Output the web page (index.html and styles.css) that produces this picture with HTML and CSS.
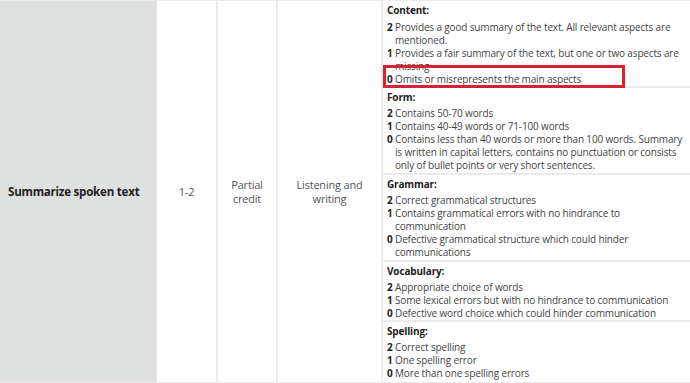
FILE: index.html
```html
<!DOCTYPE html>
<html>
<head>
<meta charset="utf-8">
<link rel="stylesheet" href="styles.css">
</head>
<body>
<div class="table">
  <div class="cell task">Summarize spoken text</div>
  <div class="cell c2">1-2</div>
  <div class="cell c3">Partial<br>credit</div>
  <div class="cell c4">Listening and<br>writing</div>
  <div class="criteria">
    <div class="sec s-content">
      <div class="head">Content:</div>
      <div class="item"><b>2</b> Provides a good summary of the text. All relevant aspects are mentioned.</div>
      <div class="item"><b>1</b> Provides a fair summary of the text, but one or two aspects are missing</div>
      <div class="item"><b>0</b> Omits or misrepresents the main aspects</div>
      <div class="highlight"></div>
    </div>
    <div class="sec s-form">
      <div class="head">Form:</div>
      <div class="item"><b>2</b> Contains 50-70 words</div>
      <div class="item"><b>1</b> Contains 40-49 words or 71-100 words</div>
      <div class="item"><b>0</b> Contains less than 40 words or more than 100 words. Summary is written in capital letters, contains no punctuation or consists only of bullet points or very short sentences.</div>
    </div>
    <div class="sec s-grammar">
      <div class="head">Grammar:</div>
      <div class="item"><b>2</b> Correct grammatical structures</div>
      <div class="item"><b>1</b> Contains grammatical errors with no hindrance to communication</div>
      <div class="item"><b>0</b> Defective grammatical structure which could hinder communications</div>
    </div>
    <div class="sec s-vocab">
      <div class="head">Vocabulary:</div>
      <div class="item"><b>2</b> Appropriate choice of words</div>
      <div class="item"><b>1</b> Some lexical errors but with no hindrance to communication</div>
      <div class="item"><b>0</b> Defective word choice which could hinder communication</div>
    </div>
    <div class="sec s-spell">
      <div class="head">Spelling:</div>
      <div class="item"><b>2</b> Correct spelling</div>
      <div class="item"><b>1</b> One spelling error</div>
      <div class="item"><b>0</b> More than one spelling errors</div>
    </div>
  </div>
</div>
</body>
</html>
```

FILE: styles.css
```css
* { box-sizing: border-box; }
html, body { margin: 0; padding: 0; background: #fff; }
body {
  font-family: "Open Sans", "Liberation Sans", sans-serif;
  color: #3a3a3a;
  width: 690px;
  height: 383px;
  overflow: hidden;
}
.table {
  display: flex;
  align-items: stretch;
  height: 383px;
  border-top: 1px solid #ececec;
  border-bottom: 1px solid #ececec;
}
.cell {
  display: flex;
  align-items: center;
  justify-content: center;
  text-align: center;
  font-size: 11px;
  line-height: 14px;
  letter-spacing: -0.2px;
  border-right: 2px solid #ebebeb;
  color: #555;
}
.task {
  width: 157px;
  background: #dfe1e0;
  font-weight: 700;
  font-size: 11.6px;
  letter-spacing: -0.25px;
  color: #222;
  justify-content: flex-start;
  padding-left: 8px;
  border-right: 1px solid #e6e6e6;
}
.c2 { width: 61px; }
.c3 { width: 60px; }
.c4 { width: 105px; }
.criteria {
  flex: 1;
  display: flex;
  flex-direction: column;
}
.sec {
  position: relative;
  padding: 3px 6px 0 4px;
  border-bottom: 2px solid #ebebeb;
  font-size: 10px;
  letter-spacing: -0.15px;
}
.sec:last-child { border-bottom: none; }
.s-content { height: 87px; }
.s-form { height: 87px; }
.s-grammar { height: 87px; }
.s-vocab { height: 60px; }
.s-spell { flex: 1; }
.head {
  font-weight: 700;
  color: #222;
  line-height: 13px;
  margin-bottom: 3px;
}
.s-content .head { margin-bottom: 4px; }
.item {
  line-height: 13px;
  padding-left: 8px;
  text-indent: -8px;
  color: #444;
}
.item b { color: #222; font-weight: 700; }
.highlight {
  position: absolute;
  left: 0;
  top: 64px;
  width: 242px;
  height: 23px;
  border: 3px solid #d8222f;
}
```
